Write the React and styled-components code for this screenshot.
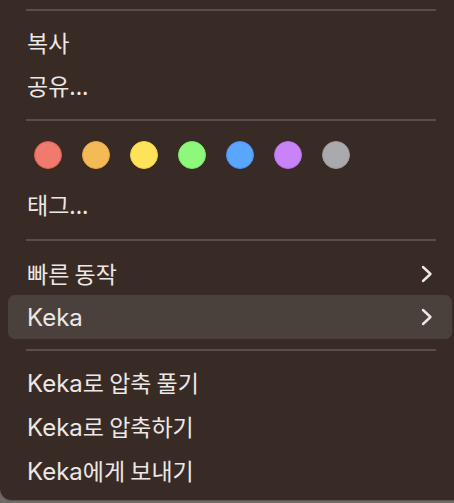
import styled, { createGlobalStyle } from 'styled-components'

const GlobalStyle = createGlobalStyle`
  html, body {
    margin: 0;
    padding: 0;
    background: #6e6a68;
  }
  * {
    box-sizing: border-box;
  }
`

const Menu = styled.div`
  width: 454px;
  height: 501px;
  background: #382b26;
  border-bottom: 1px solid #5e5653;
  border-bottom-left-radius: 12px;
  padding: 9px 2px 0 8px;
  font-family: "Noto Sans CJK KR", "Inter", sans-serif;
  font-size: 23px;
  color: #ece8e6;
`

const Separator = styled.div`
  height: 2px;
  margin: 0 16px 0 18px;
  background: #5a4e48;
`

const Group = styled.div`
  padding: ${(p) => p.$pad || '10px 0 12px'};
`

const Item = styled.div`
  height: ${(p) => p.$h || 43}px;
  display: flex;
  align-items: center;
  justify-content: space-between;
  padding: 0 19px 0 19px;
  border-radius: 7px;
  background: ${(p) => (p.$active ? '#4b413c' : 'transparent')};
`

const Label = styled.span`
  white-space: nowrap;
  line-height: 1;
`

const Latin = styled.span`
  font-family: "Inter", sans-serif;
  font-size: 24px;
`

const Swatches = styled.div`
  display: flex;
  gap: 20px;
  padding: 10px 0 14px 26px;
`

const Swatch = styled.div`
  width: 28px;
  height: 28px;
  border-radius: 50%;
  background: ${(p) => p.$fill};
  border: 1.5px solid ${(p) => p.$ring};
`

const swatches = [
  ['#ef7b6e', '#e5594c'],
  ['#f3bb58', '#eea63a'],
  ['#fde25a', '#f6d344'],
  ['#8df87b', '#77ec64'],
  ['#5aa5fd', '#4a8ef6'],
  ['#c983f9', '#b76eef'],
  ['#aaa9ac', '#99989b'],
]

const Chevron = () => (
  <svg width="12" height="18" viewBox="0 0 12 18">
    <polyline points="2,2 9.5,9 2,16" fill="none" stroke="#ece8e6" strokeWidth="2.4" strokeLinecap="round" strokeLinejoin="round" />
  </svg>
)

const App = () => {
  return (
    <>
      <GlobalStyle />
      <Menu>
        <Separator />
        <Group $pad="10px 0 12px">
          <Item><Label>복사</Label></Item>
          <Item><Label>공유...</Label></Item>
        </Group>
        <Separator />
        <Group $pad="10px 0 13px">
          <Swatches>
            {swatches.map(([fill, ring]) => (
              <Swatch key={fill} $fill={fill} $ring={ring} />
            ))}
          </Swatches>
          <Item><Label>태그...</Label></Item>
        </Group>
        <Separator />
        <Group $pad="11px 0 10px">
          <Item><Label>빠른 동작</Label><Chevron /></Item>
          <Item $h={44} $active><Label><Latin>Keka</Latin></Label><Chevron /></Item>
        </Group>
        <Separator />
        <Group $pad="10px 0 0">
          <Item $h={44}><Label><Latin>Keka</Latin>로 압축 풀기</Label></Item>
          <Item $h={44}><Label><Latin>Keka</Latin>로 압축하기</Label></Item>
          <Item $h={44}><Label><Latin>Keka</Latin>에게 보내기</Label></Item>
        </Group>
      </Menu>
    </>
  )
}

export default App
